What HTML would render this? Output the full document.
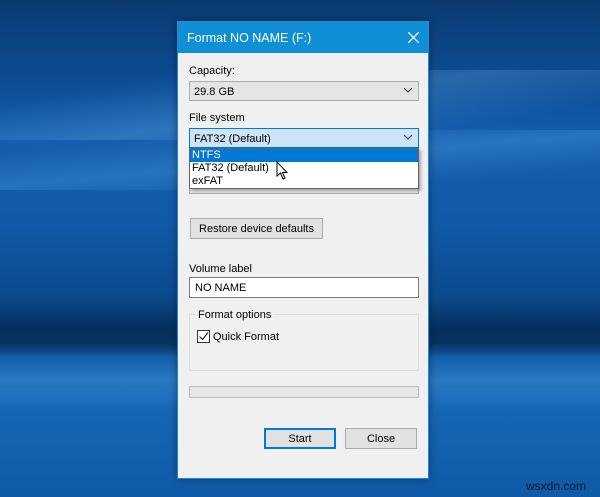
<!DOCTYPE html>
<html><head><style>
*{margin:0;padding:0;box-sizing:border-box}
body{width:600px;height:497px;overflow:hidden;position:relative;font-family:"Liberation Sans",sans-serif;font-size:11px;color:#000;
background:linear-gradient(180deg,#0b3a72 0%,#0d4f98 18%,#155fae 28%,#115aa8 45%,#0b4a8c 60%,#072f5e 66%,#08335f 69%,#115aa6 72%,#1768b8 80%,#105aa6 100%);}
.beam{position:absolute;left:0;width:600px}
#dlg{position:absolute;left:177px;top:21px;width:252px;height:458px;background:#f0f0f0;border:1px solid #1a8ad4;box-shadow:0 0 8px rgba(0,0,0,.4)}
#title{position:absolute;left:0;top:0;width:250px;height:31px;background:#0f8fd6;color:#fff;font-size:12.5px;padding:9px 0 0 9px}
.a{position:absolute}
.combo{position:absolute;left:11px;width:230px;height:20px;border:1px solid #adadad;background:#e5e5e5;padding:4px 0 0 4px}
.chev{position:absolute;right:6px;top:6px;width:8px;height:5px}
.btn{position:absolute;border:1px solid #adadad;background:#e1e1e1;text-align:center;padding-top:4px}
</style></head><body>
<div class="beam" style="top:70px;height:70px;background:linear-gradient(170deg,transparent 20%,rgba(120,190,240,.25) 50%,transparent 80%)"></div>
<div class="beam" style="top:130px;height:60px;background:linear-gradient(175deg,transparent 20%,rgba(100,180,240,.25) 50%,transparent 80%)"></div>
<div class="beam" style="top:350px;height:60px;background:linear-gradient(180deg,transparent,rgba(90,170,235,.3),transparent)"></div>
<div id="dlg">
<div id="title">Format NO NAME (F:)</div>
<svg style="position:absolute;left:230px;top:10px" width="11" height="11"><path d="M0 0L11 11M11 0L0 11" stroke="#fff" stroke-width="1.3"/></svg>
<div class="a" style="left:11px;top:43px">Capacity:</div>
<div class="combo" style="top:59px">29.8 GB<svg class="chev" viewBox="0 0 8 5"><path d="M0 0L4 4L8 0" fill="none" stroke="#333"/></svg></div>
<div class="a" style="left:11px;top:90px">File system</div>
<div class="combo" style="top:106px;background:#cce4f7;border-color:#0078d7">FAT32 (Default)<svg class="chev" viewBox="0 0 8 5"><path d="M0 0L4 4L8 0" fill="none" stroke="#333"/></svg></div>
<div class="combo" style="top:152px;height:20px"></div>
<div class="a" style="left:11px;top:126px;width:230px;height:41px;background:#fff;border:1px solid #646464;box-shadow:2px 2px 3px rgba(0,0,0,.3)">
 <div style="background:#0078d7;color:#fff;height:13px;padding-left:2px;line-height:13px">NTFS</div>
 <div style="height:13px;padding-left:2px;line-height:13px">FAT32 (Default)</div>
 <div style="height:13px;padding-left:2px;line-height:13px">exFAT</div>
</div>
<svg class="a" style="left:98px;top:139px" width="12" height="19" viewBox="0 0 12 19"><path d="M1 1L1 15L4.5 12L7 18L9 17L6.5 11.5L11 11.5Z" fill="#fff" stroke="#000" stroke-width="1"/></svg>
<div class="btn" style="left:12px;top:196px;width:133px;height:21px">Restore device defaults</div>
<div class="a" style="left:11px;top:241px">Volume label</div>
<div class="a" style="left:11px;top:255px;width:230px;height:21px;background:#fff;border:1px solid #7a7a7a;padding:4px 0 0 5px">NO NAME</div>
<div class="a" style="left:11px;top:292px;width:230px;height:57px;border:1px solid #dcdcdc"></div>
<div class="a" style="left:18px;top:287px;background:#f0f0f0;padding:0 2px">Format options</div>
<div class="a" style="left:19px;top:308px;width:13px;height:13px;border:1px solid #333;background:#fff"><svg width="11" height="11" style="position:absolute;left:0;top:0"><path d="M1.5 5.5L4.5 8.5L10 1.5" fill="none" stroke="#222" stroke-width="1.2"/></svg></div>
<div class="a" style="left:35px;top:309px">Quick Format</div>
<div class="a" style="left:11px;top:364px;width:230px;height:12px;border:1px solid #bcbcbc;background:#e6e6e6"></div>
<div class="btn" style="left:86px;top:406px;width:72px;height:21px;border:2px solid #0078d7;padding-top:3px">Start</div>
<div class="btn" style="left:167px;top:406px;width:72px;height:21px">Close</div>
</div>
<div class="a" style="left:526px;top:479px;font-size:12px;color:#0a1a2a">wsxdn.com</div>
</body></html>
